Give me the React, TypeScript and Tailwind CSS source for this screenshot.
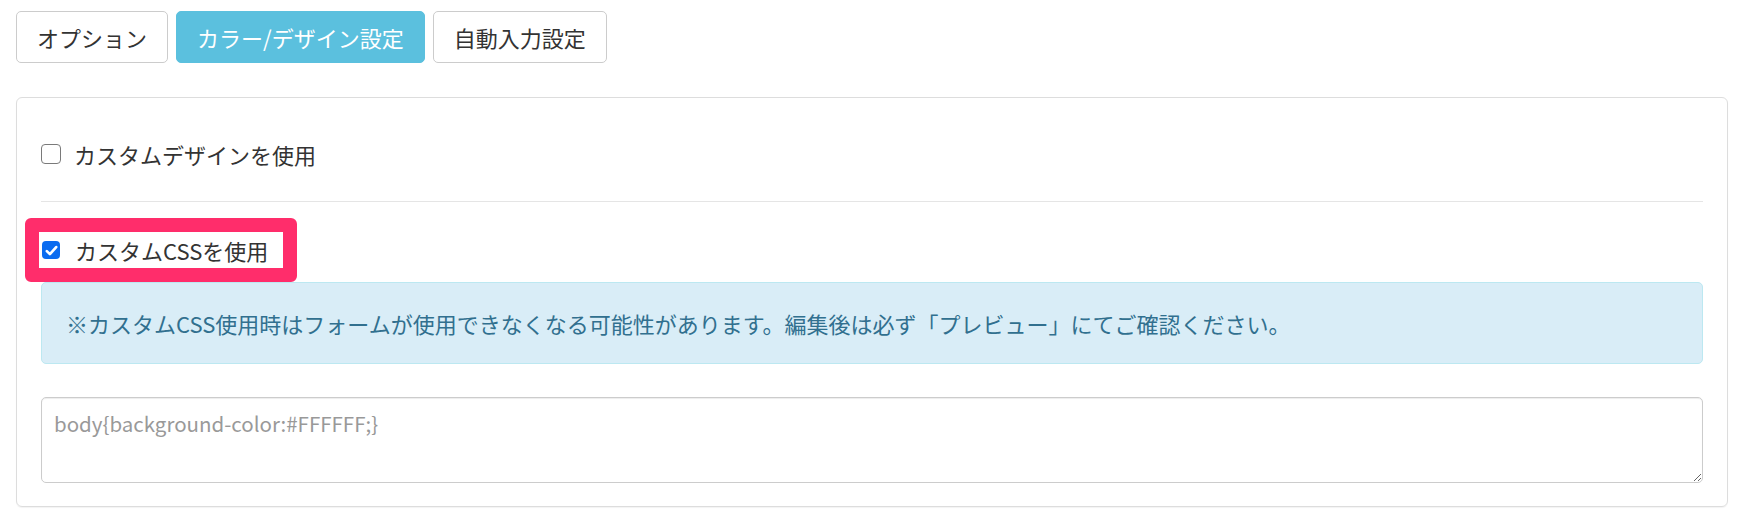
import { useState } from 'react';

const tabs = ['オプション', 'カラー/デザイン設定', '自動入力設定'];

function Box({ checked }: { checked: boolean }) {
  if (checked) {
    return (
      <span className="flex h-[18px] w-[18px] shrink-0 items-center justify-center rounded-[4px] bg-[#0b6cf0]">
        <svg viewBox="0 0 16 16" className="h-[15px] w-[15px]" fill="none">
          <path d="M3 8.6l3.3 3.3L13 4.3" stroke="#fff" strokeWidth="2.8" strokeLinecap="round" strokeLinejoin="round" />
        </svg>
      </span>
    );
  }
  return <span className="h-[20px] w-[20px] shrink-0 rounded-[4px] border-[1.5px] border-[#7a7a7a] bg-white" />;
}

export default function App() {
  const [active, setActive] = useState(1);
  const [useDesign, setUseDesign] = useState(false);
  const [useCss, setUseCss] = useState(true);

  return (
    <div
      className="min-h-screen bg-white px-4 pt-[11px] text-[22px] text-[#333]"
      style={{ fontFamily: '"Noto Sans CJK JP", "Noto Sans", sans-serif' }}
    >
      <div className="flex gap-2">
        {tabs.map((t, i) => (
          <button
            key={t}
            type="button"
            onClick={() => setActive(i)}
            className={
              i === active
                ? 'h-[52px] rounded-[5px] border border-[#5bc0de] bg-[#5bc0de] px-5 text-white'
                : 'h-[52px] rounded-[5px] border border-[#cccccc] bg-white px-5 text-[#333]'
            }
          >
            {t}
          </button>
        ))}
      </div>

      <div className="mt-[34px] rounded-[6px] border border-[#dddddd] px-6 pt-10 pb-[23px] shadow-[0_1px_1px_rgba(0,0,0,0.05)]">
        <label className="flex h-8 cursor-pointer items-center gap-[13px]" onClick={() => setUseDesign(!useDesign)}>
          <Box checked={useDesign} />
          <span>カスタムデザインを使用</span>
        </label>

        <div className="mt-[31px] border-t border-[#e5e5e5]" />

        <div className="mt-4 -ml-4 inline-flex rounded-[6px] border-[14px] border-[#ff2d6b] bg-white">
          <label className="flex h-9 cursor-pointer items-center gap-[15px] pl-[3px] pr-[15px]" onClick={() => setUseCss(!useCss)}>
            <Box checked={useCss} />
            <span>カスタムCSSを使用</span>
          </label>
        </div>

        <div className="rounded-[5px] border border-[#bce8f1] bg-[#d9edf7] px-6 py-6 leading-8 text-[#31708f]">
          ※カスタムCSS使用時はフォームが使用できなくなる可能性があります。編集後は必ず「プレビュー」にてご確認ください。
        </div>

        <textarea
          className="mt-[33px] block h-[86px] w-full rounded-[5px] border border-[#cccccc] px-3 py-[10px] text-[20.5px] leading-[30px] text-[#555] shadow-[inset_0_1px_1px_rgba(0,0,0,0.075)] outline-none placeholder:text-[#999]"
          placeholder="body{background-color:#FFFFFF;}"
        />
      </div>
    </div>
  );
}
